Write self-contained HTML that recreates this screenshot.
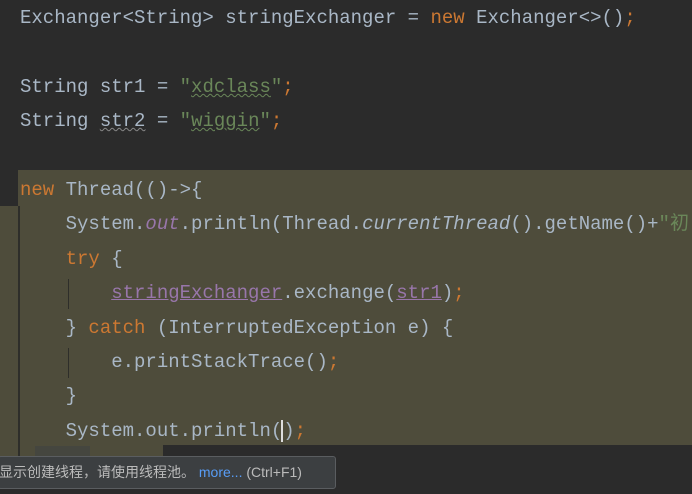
<!DOCTYPE html>
<html><head><meta charset="utf-8"><style>
body{margin:0;width:692px;height:494px;background:#2b2b2b;overflow:hidden;position:relative;font-family:"Liberation Mono","Noto Sans CJK SC",monospace;font-size:19px;color:#a9b7c6}
.hl{position:absolute;background:#4e4c3b}
.l{position:absolute;left:20px;white-space:pre;line-height:34px;height:34px}
.k{color:#cc7832}.s{color:#6a8759}.p{color:#9876aa}.i{font-style:italic}
.u{text-decoration:underline;text-decoration-color:#9876aa}
.w{text-decoration:underline wavy #6a8759;text-decoration-thickness:1px}
.g{position:absolute;left:18px;width:2px;background:#2e2e2a}
.tip{position:absolute;left:-2px;top:456px;width:336px;height:31px;background:#3c3f41;border:1px solid #5a5d60;border-radius:3px;font-family:"Liberation Sans","Noto Sans CJK SC",sans-serif;font-size:14px;line-height:31px;color:#bbb;white-space:nowrap}
</style></head><body>
<div class="hl" style="left:18px;top:170px;width:674px;height:36px"></div>
<div class="hl" style="left:0;top:206px;width:692px;height:252px"></div>
<div class="g" style="top:206px;height:252px"></div>
<div class="g" style="left:68px;top:279px;height:30px;width:1px"></div>
<div class="g" style="left:68px;top:348px;height:30px;width:1px"></div>
<div class="l" style="top:1px">Exchanger&lt;String&gt; stringExchanger = <span class="k">new</span> Exchanger&lt;&gt;()<span class="k">;</span></div>
<div class="l" style="top:70px">String str1 = <span class="s">"<span class="w">xdclass</span>"</span><span class="k">;</span></div>
<div class="l" style="top:104px">String <span class="w" style="text-decoration-color:#888">str2</span> = <span class="s">"<span class="w">wiggin</span>"</span><span class="k">;</span></div>
<div class="l" style="top:173px"><span class="k">new</span> Thread(()-&gt;{</div>
<div class="l" style="top:207px">    System.<span class="p i">out</span>.println(Thread.<span class="i">currentThread</span>().getName()+<span class="s">"初</span></div>
<div class="l" style="top:242px">    <span class="k">try</span> {</div>
<div class="l" style="top:276px">        <span class="p u">stringExchanger</span>.exchange(<span class="p u">str1</span>)<span class="k">;</span></div>
<div class="l" style="top:311px">    } <span class="k">catch</span> (InterruptedException e) {</div>
<div class="l" style="top:345px">        e.printStackTrace()<span class="k">;</span></div>
<div class="l" style="top:379px">    }</div>
<div class="l" style="top:414px">    System.out.println(<span style="border-left:2px solid #ddd;margin-left:-1px"></span>)<span class="k">;</span></div>
<div style="position:absolute;left:163px;top:445px;width:529px;height:49px;background:#2b2b2b"></div>
<div style="position:absolute;left:35px;top:446px;width:55px;height:12px;background:#45463f"></div>
<div class="tip">显示创建线程，请使用线程池。 <span style="color:#589df6">more...</span> (Ctrl+F1)</div>
</body></html>
